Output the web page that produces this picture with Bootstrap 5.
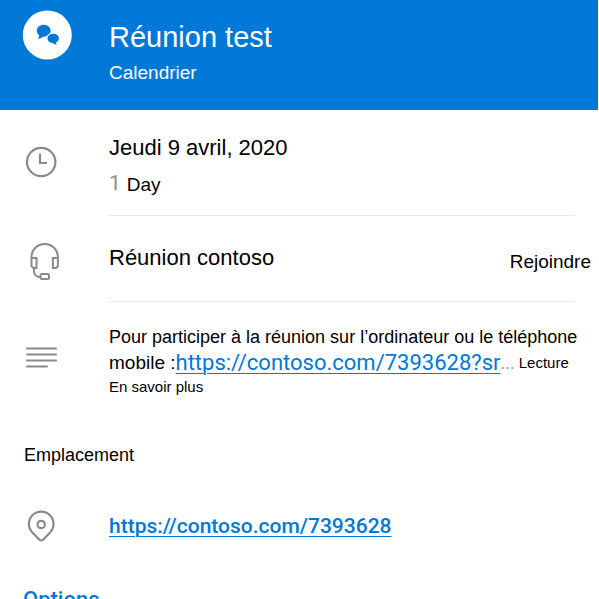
<!DOCTYPE html>
<html lang="fr">
<head>
<meta charset="utf-8">
<meta name="viewport" content="width=device-width, initial-scale=1">
<title>Réunion test</title>
<link rel="stylesheet" href="https://cdn.jsdelivr.net/npm/bootstrap@5.3.0/dist/css/bootstrap.min.css">
<style>
  body { font-family: "Liberation Sans", Arial, sans-serif; font-size: 18px; line-height: 24px; color: #000; background: #fff; overflow: hidden; height: 100vh; }
  .event-header { background: #0078d7; min-height: 110px; padding-top: 10px; }
  .icon-cell { flex: 0 0 109px; padding-left: 24px; }
  .header-icon { padding-left: 22px; }
  .icon-cell svg { display: block; }
  .event-title { font-size: 29px; line-height: 32px; padding-top: 11px; }
  .text-md { font-size: 19px; line-height: 24px; }
  .text-lg { font-size: 22px; line-height: 28px; }
  .text-xs { font-size: 15px; line-height: 20px; }
  .calendar-name { padding-top: 8px; }
  .ruled { border-bottom: 1px solid #e8e8e8; margin-right: 24px; }
  .clock-icon { padding-top: 35px; }
  .lines-icon { padding-top: 45px; }
  .date-block { padding-top: 24px; height: 106px; }
  .day-line { padding-top: 11px; gap: 6px; }
  .day-count { font-family: Roboto, sans-serif; font-size: 21px; line-height: 20px; color: #8c8c8c; }
  .meet-block { height: 86px; padding-top: 28px; }
  .join { border: 0; background: none; padding: 0; color: #000; margin: 6px -16px 0 0; }
  .body-block { padding-top: 23px; }
  .url { font-family: Roboto, sans-serif; font-size: 22px; color: #0078d7; text-decoration-thickness: 1px; text-underline-offset: 3px; }
  .url-line { height: 28px; }
  .dots { font-family: Roboto, sans-serif; color: #a0a0a0; }
  .plain-link { color: #000; text-decoration: none; }
  .section-label { padding: 46px 24px 0; font-size: 18px; line-height: 24px; }
  .place-row { padding-top: 42px; }
  .place-url { font-weight: 500; font-size: 21px; line-height: 34px; }
  .options { font-family: Roboto, sans-serif; font-weight: 500; font-size: 22px; line-height: 24px; color: #0078d7; padding: 45px 23px 0; }
</style>
<script src="https://cdn.jsdelivr.net/npm/bootstrap@5.3.0/dist/js/bootstrap.bundle.min.js"></script>
</head>
<body>
<header class="event-header d-flex text-white border-end border-white">
  <div class="icon-cell header-icon">
    <svg width="50" height="50" viewBox="0 0 50 50" aria-hidden="true">
      <circle cx="25.300" cy="25" r="24.500" fill="#fff"/>
      <g fill="#0078d7">
        <ellipse cx="21.700" cy="20.800" rx="7" ry="6"/>
        <path d="M17 24c.4 2 0 3.300-1.400 4.700 2.700-.2 4.400-1 5.600-2.500z"/>
        <ellipse cx="31.200" cy="28.400" rx="6.300" ry="5.300" stroke="#fff" stroke-width="1.200"/>
        <path d="M31 33c1.200 1.100 2 1.500 3.800 1.700-.8-1-1-2-.7-3.500z"/>
      </g>
    </svg>
  </div>
  <div>
    <h1 class="event-title fw-normal m-0">Réunion test</h1>
    <div class="text-md calendar-name">Calendrier</div>
  </div>
</header>
<main>
  <section class="d-flex">
    <div class="icon-cell clock-icon">
      <svg width="34" height="34" viewBox="0 0 34 34" fill="none" stroke="#8a8a8a" stroke-width="2.200" aria-hidden="true"><circle cx="17.200" cy="17" r="14.200"/><path d="M16 8.500V18h7"/></svg>
    </div>
    <div class="flex-grow-1 ruled date-block">
      <div class="text-lg">Jeudi 9 avril, 2020</div>
      <div class="d-flex day-line text-md"><span class="day-count">1</span><span>Day</span></div>
    </div>
  </section>
  <section class="d-flex">
    <div class="icon-cell pt-4">
      <svg width="40" height="42" viewBox="0 0 40 42" fill="none" stroke="#8a8a8a" stroke-width="2" aria-hidden="true"><path d="M7.500 27V17a13.200 13 0 0 1 26.400 0v10M7.500 18h5v10H9.200l-1.700-2zM33.900 18h-5v10h3.300l1.700-2zM10 28v3c0 3.500 2.500 6 6 6h1"/><rect x="16.500" y="34" width="8.500" height="5" rx="1.500"/></svg>
    </div>
    <div class="flex-grow-1 ruled meet-block d-flex justify-content-between align-items-start">
      <div class="text-lg">Réunion contoso</div>
      <button type="button" class="join text-md">Rejoindre</button>
    </div>
  </section>
  <section class="d-flex">
    <div class="icon-cell lines-icon">
      <svg width="34" height="24" viewBox="0 3 34 24" fill="none" stroke="#8a8a8a" stroke-width="2" stroke-linecap="round" aria-hidden="true"><path d="M3 4.500h29M3 10.500h29M3 16.500h29M3 22.500h20"/></svg>
    </div>
    <div class="flex-grow-1 body-block">
      <div>Pour participer à la réunion sur l’ordinateur ou le téléphone</div>
      <div class="url-line d-flex align-items-center"><span class="text-md">mobile :</span><a class="url" href="#">https://contoso.com/7393628?sr</a><span class="dots">...</span><a class="plain-link text-xs ms-1" href="#">Lecture</a></div>
      <a class="plain-link text-xs d-block" href="#">En savoir plus</a>
    </div>
  </section>
  <h2 class="section-label fw-normal m-0">Emplacement</h2>
  <section class="d-flex place-row">
    <div class="icon-cell">
      <svg width="34" height="34" viewBox="0 0 34 34" fill="none" stroke="#8a8a8a" stroke-width="2.200" stroke-linejoin="round" aria-hidden="true"><path d="M17.200 31.500c-1 0-1.800-.8-2.600-1.600l-6-6.100a12.300 12.300 0 1 1 17.200 0l-6 6.100c-.8.800-1.600 1.600-2.600 1.600z"/><circle cx="17.200" cy="15.500" r="3.700"/></svg>
    </div>
    <a class="url place-url" href="#">https://contoso.com/7393628</a>
  </section>
  <div class="options"><a class="text-reset text-decoration-none" href="#">Options</a></div>
</main>
</body>
</html>
